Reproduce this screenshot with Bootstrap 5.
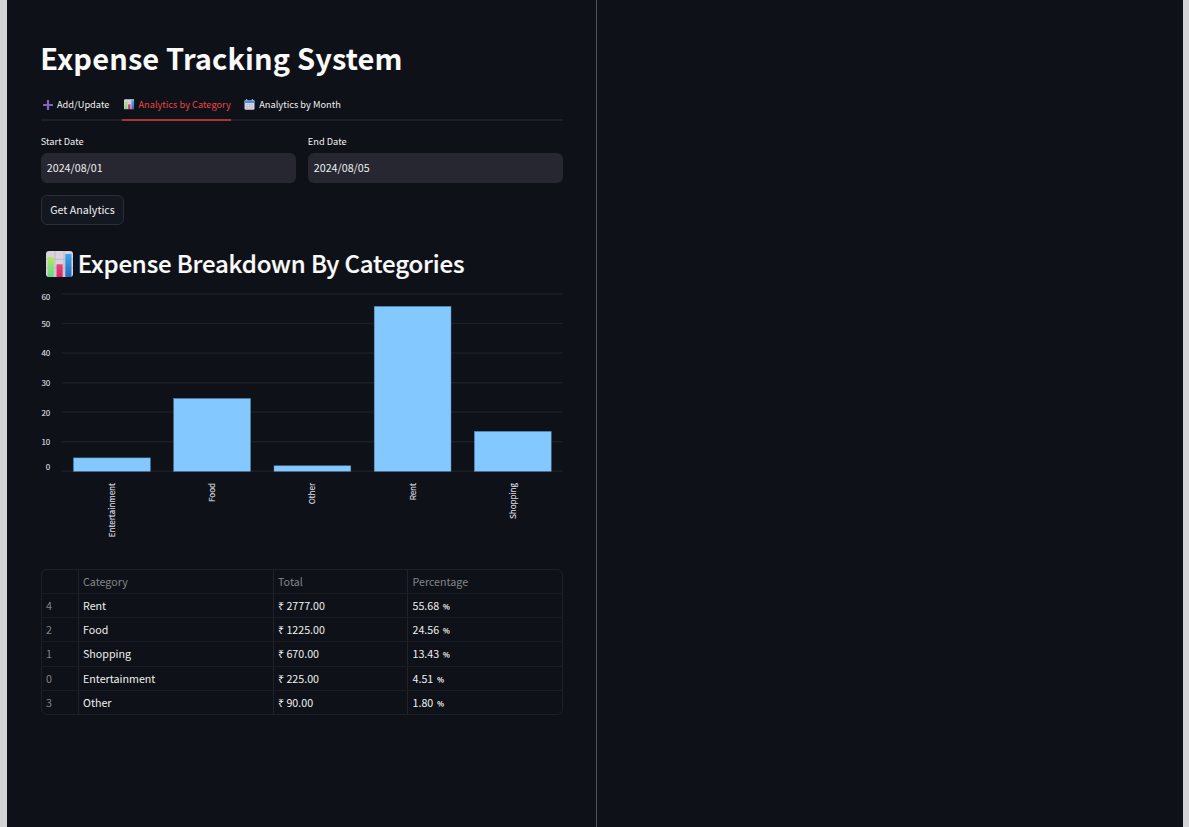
<!DOCTYPE html>
<html lang="en">
<head>
<meta charset="utf-8">
<meta name="viewport" content="width=device-width, initial-scale=1">
<title>Expense Tracking System</title>
<link href="https://cdn.jsdelivr.net/npm/bootstrap@5.3.0/dist/css/bootstrap.min.css" rel="stylesheet">
<style>
  body { background: #d3d3d5; color: #fafafa; font-family: "Noto Sans CJK SC", sans-serif; font-size: 10.7px; overflow: hidden; }
  .app-frame { margin: 0 6px 0 7px; background: #0e1117; }
  .left-pane { width: 590px; padding: 40px 33.5px 0 34px; border-right: 1px solid #515356; }
  h1 { font-size: 29px; line-height: 35px; font-weight: 700; margin: 0 0 15px -.7px; letter-spacing: .13px; }
  h2 { font-size: 24px; line-height: 30px; font-weight: 500; color: #fafafa; letter-spacing: -.16px; -webkit-text-stroke: .2px #fafafa; }
  .tab-row { height: 31px; border-bottom: 2px solid #1d2024; gap: 12px; font-size: 9.25px; line-height: 29px; }
  .tab-row .nav-link { padding: 0 0 2px 2px; color: #f0f0f1; height: 31px; }
  .tab-row .nav-link.active { color: #e84547; border-bottom: 2px solid #a93539; padding-bottom: 0; margin-left: .5px; margin-right: -.5px; }
  .field-row { gap: 12px; margin: 13px -.5px 0 0; }
  .field-label { display: block; font-size: 9.25px; line-height: 15px; margin: 0 0 4.3px -.2px; color: #f0f0f1; }
  .field-box { background: #262730; border: 0; border-radius: 6px; height: 29.4px; padding: 0 6.3px; margin-left: -.5px; color: #f0f0f1; font-size: 10.7px; line-height: 29px; }
  .run-btn { height: 30px; width: 83px; border: 1px solid #2b2e35; border-radius: 6px; background: #131720; color: #f0f0f1; font-size: 10.7px; line-height: 28px; padding: 0; margin-top: 12.3px; }
  .head-row { margin-top: 23px; height: 32px; }
  .head-row svg { margin: 3.4px 5px 0 4.7px; }
  .head-row h2 { margin: 0; }
  .chart-area { display: block; width: 522px; height: 255px; margin-top: 8px; overflow: visible; }
  .chart-area text { font-size: 8px; fill: #dedfe2; stroke: #dedfe2; stroke-width: .12px; }
  .data-grid { width: 522px; border: 1px solid #1d2026; border-radius: 6px; margin-top: 26px; overflow: hidden; }
  .data-grid .grid-line { display: grid; grid-template-columns: 36px 195px 134px 1fr; height: 24.16px; line-height: 23px; border-bottom: 1px solid #191c22; }
  .data-grid .grid-line:last-child { border-bottom: 0; height: 23.3px; }
  .grid-line > span { padding-left: 4px; border-left: 1px solid #20232a; white-space: nowrap; color: #f0f0f1; }
  .grid-line > span:last-child { padding-left: 4.5px; }
  .grid-line > span:first-child { border-left: 0; color: #83858a; }
  .data-grid .grid-head > span { color: #83858a; }
  .pct-sign { display: inline-block; line-height: 1; font-size: 9.6px; transform: translateY(-1px); -webkit-text-stroke: .15px #f0f0f1; }
</style>
</head>
<body>
<svg width="0" height="0" class="position-absolute" aria-hidden="true">
  <defs>
    <linearGradient id="gGreen" x1="0" y1="0" x2="0" y2="1"><stop stop-color="#b4e85c"/><stop offset="1" stop-color="#5fd98c"/></linearGradient>
    <linearGradient id="gPink" x1="0" y1="0" x2="0" y2="1"><stop stop-color="#e8467c"/><stop offset="1" stop-color="#dc245c"/></linearGradient>
    <linearGradient id="gBlue" x1="0" y1="0" x2="0" y2="1"><stop stop-color="#41a5ee"/><stop offset="1" stop-color="#2469bd"/></linearGradient>
    <symbol id="barIcon" viewBox="0 0 27 26">
      <rect width="27" height="26" rx="3" fill="#d9d2df"/>
      <path d="M0 8.3H27M0 17H27M9 0V26M18 0V26" stroke="#bdb5c5" stroke-width=".9"/>
      <rect x="1.6" y="6" width="6.2" height="20" rx=".6" fill="url(#gGreen)"/>
      <rect x="10.5" y="13.3" width="6.2" height="12.7" rx=".6" fill="url(#gPink)"/>
      <rect x="19.3" y="3" width="6.2" height="23" rx=".6" fill="url(#gBlue)"/>
    </symbol>
  </defs>
</svg>
<div class="app-frame vh-100">
  <main class="left-pane h-100">
    <h1>Expense Tracking System</h1>
    <nav class="nav tab-row flex-nowrap">
      <a class="nav-link d-flex align-items-center" href="#"><svg width="10" height="10" viewBox="0 0 10 10" class="me-1"><path d="M5 .8V9.2M.8 5H9.2" stroke="#8066bd" stroke-width="2.2" stroke-linecap="round"/></svg><span>Add/Update</span></a>
      <a class="nav-link active d-flex align-items-center" href="#"><svg width="10.5" height="10.5" class="me-1"><use href="#barIcon"/></svg><span>Analytics by Category</span></a>
      <a class="nav-link d-flex align-items-center" href="#"><svg width="11" height="11" viewBox="0 0 11 11" class="me-1"><rect x=".5" y="1" width="10" height="9.7" rx="1.3" fill="#d5cfe2"/><path d="M.5 4V2.3Q.5 1 1.8 1H9.2Q10.5 1 10.5 2.3V4Z" fill="#4d91d4"/><path d="M2.7 0V2M8.3 0V2" stroke="#a9c8e6" stroke-width="1"/><path d="M3 5V9.5M5.5 5V9.5M8 5V9.5" stroke="#b5b0cd" stroke-width="1" stroke-dasharray="1 .8"/></svg><span>Analytics by Month</span></a>
    </nav>
    <div class="d-flex field-row">
      <div class="flex-fill"><label class="field-label" for="sd">Start Date</label><input id="sd" class="field-box w-100" value="2024/08/01"></div>
      <div class="flex-fill"><label class="field-label" for="ed">End Date</label><input id="ed" class="field-box w-100" value="2024/08/05"></div>
    </div>
    <button class="btn run-btn d-block" type="button">Get Analytics</button>
    <div class="d-flex align-items-start head-row"><svg width="27" height="26"><use href="#barIcon"/></svg><h2>Expense Breakdown By Categories</h2></div>
    <svg class="chart-area" viewBox="41 288 522 255">
      <path d="M62 294H563M62 323.5H563M62 353H563M62 382.7H563M62 412H563M62 441.7H563M62 471.3H563" stroke="#1b1e24" stroke-width="1.5"/>
      <g fill="#83c9ff" stroke="#5988ad" stroke-width=".5">
        <rect x="73.5" y="457.9" width="76.8" height="13.4"/><rect x="173.7" y="398.5" width="76.8" height="72.8"/><rect x="274" y="465.8" width="76.8" height="5.5"/><rect x="374.2" y="306.4" width="76.8" height="164.9"/><rect x="474.4" y="431.4" width="76.8" height="39.9"/>
      </g>
      <g text-anchor="end">
        <text x="50.3" y="300">60</text><text x="50.3" y="327">50</text><text x="50.3" y="356">40</text><text x="50.3" y="386">30</text><text x="50.3" y="415.5">20</text><text x="50.3" y="445">10</text><text x="50.3" y="470">0</text>
        <text transform="translate(114.7 483) rotate(-90)">Entertainment</text><text transform="translate(215 483) rotate(-90)">Food</text><text transform="translate(315.4 483) rotate(-90)">Other</text><text transform="translate(415.7 483) rotate(-90)">Rent</text><text transform="translate(516 483) rotate(-90)">Shopping</text>
      </g>
    </svg>
    <div class="data-grid">
      <div class="grid-line grid-head"><span></span><span>Category</span><span>Total</span><span>Percentage</span></div>
      <div class="grid-line"><span>4</span><span>Rent</span><span>₹ 2777.00</span><span>55.68 <span class="pct-sign">﹪</span></span></div>
      <div class="grid-line"><span>2</span><span>Food</span><span>₹ 1225.00</span><span>24.56 <span class="pct-sign">﹪</span></span></div>
      <div class="grid-line"><span>1</span><span>Shopping</span><span>₹ 670.00</span><span>13.43 <span class="pct-sign">﹪</span></span></div>
      <div class="grid-line"><span>0</span><span>Entertainment</span><span>₹ 225.00</span><span>4.51 <span class="pct-sign">﹪</span></span></div>
      <div class="grid-line"><span>3</span><span>Other</span><span>₹ 90.00</span><span>1.80 <span class="pct-sign">﹪</span></span></div>
    </div>
  </main>
</div>
<script src="https://cdn.jsdelivr.net/npm/bootstrap@5.3.0/dist/js/bootstrap.bundle.min.js"></script>
</body>
</html>
